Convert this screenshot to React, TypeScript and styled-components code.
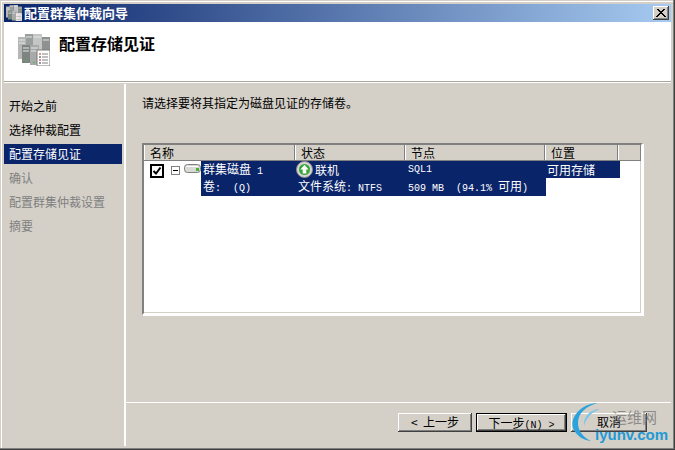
import React from 'react'
import styled, { createGlobalStyle } from 'styled-components'

const Global = createGlobalStyle`
  html, body {
    margin: 0;
    padding: 0;
    background: #d4d0c8;
  }
  * {
    box-sizing: border-box;
  }
`

const Window = styled.div`
  width: 675px;
  height: 450px;
  display: flex;
  flex-direction: column;
  position: relative;
  overflow: hidden;
  padding: 4px;
  background: #d4d0c8;
  font-family: 'Liberation Mono', 'Noto Sans CJK SC', monospace;
  font-size: 12px;
  color: #000;
  box-shadow: inset -1px -1px 0 #404040, inset -2px -2px 0 #808080, inset 1px 1px 0 #d4d0c8,
    inset 2px 2px 0 #fff;
`

const TitleBar = styled.div`
  height: 18px;
  flex: none;
  display: flex;
  align-items: center;
  padding: 0 2px 0 2px;
  gap: 2px;
  background: linear-gradient(90deg, #0a246a, #a6caf0);
  color: #fff;
  font-family: 'Noto Sans CJK SC', sans-serif;
  font-size: 13px;
  font-weight: 700;
`

const TitleText = styled.span`
  flex: 1;
  line-height: 18px;
`

const CloseButton = styled.div`
  width: 16px;
  height: 14px;
  display: flex;
  align-items: center;
  justify-content: center;
  background: #d4d0c8;
  box-shadow: inset -1px -1px 0 #404040, inset 1px 1px 0 #fff, inset -2px -2px 0 #808080;
`

const Header = styled.div`
  height: 59px;
  flex: none;
  display: flex;
  align-items: center;
  gap: 9px;
  padding: 0 0 4px 14px;
  background: #fff;
`

const HeaderTitle = styled.h1`
  margin: 0 0 13px;
  font-family: 'Noto Sans CJK SC', sans-serif;
  font-size: 16px;
  font-weight: 700;
  line-height: 20px;
`

const HeaderRule = styled.div`
  height: 3px;
  flex: none;
  border-top: 1px solid #a9a59c;
  border-bottom: 1px solid #d4d0c8;
  background: #fff;
`

const Body = styled.div`
  flex: 1;
  min-height: 0;
  display: flex;
`

const Sidebar = styled.nav`
  width: 120px;
  flex: none;
  padding-top: 10px;
  border-right: 2px solid #d4d0c8;
  display: flex;
  flex-direction: column;
  font-family: 'Noto Sans CJK SC', sans-serif;
`

const Step = styled.div<{ $active?: boolean; $disabled?: boolean }>`
  height: 20px;
  width: 118px;
  margin: 2px 0;
  padding-left: 5px;
  line-height: 20px;
  white-space: nowrap;
  background: ${(p) => (p.$active ? '#0a246a' : 'transparent')};
  color: ${(p) => (p.$active ? '#fff' : p.$disabled ? '#808080' : '#000')};
`

const Main = styled.main`
  flex: 1;
  min-width: 0;
  display: flex;
  flex-direction: column;
  border-left: 2px solid #fff;
`

const Content = styled.div`
  flex: 1;
  padding: 10px 28px 0 16px;
  display: flex;
  flex-direction: column;
  gap: 31px;
`

const Prompt = styled.p`
  margin: 0;
  height: 18px;
  line-height: 18px;
  font-family: 'Noto Sans CJK SC', sans-serif;
  white-space: nowrap;
`

const Table = styled.div`
  width: 501px;
  height: 172px;
  background: #fff;
  border: 2px solid;
  border-color: #808080 #fff #fff #808080;
  box-shadow: 1px 1px 0 #fff, inset -1px -1px 0 #d4d0c8;
  font-family: 'Noto Sans CJK SC', sans-serif;
`

const HeaderRow = styled.div`
  height: 15px;
  display: grid;
  grid-template-columns: 151px 110px 140px 73px 1fr;
  background: #d4d0c8;
  box-shadow: 0 1px 0 #808080;
`

const HeaderCell = styled.div`
  padding-left: 5px;
  line-height: 15px;
  border-left: 1px solid #fff;
  border-right: 1px solid #808080;
  overflow: hidden;
`

const TreeRow = styled.div`
  display: grid;
  grid-template-columns: 57px 95px 110px 140px 74px;
  grid-template-rows: 17px 18px;
  margin-top: 1px;
`

const Lead = styled.div`
  grid-row: 1 / span 2;
  display: flex;
  align-items: flex-start;
  padding: 3px 0 0 6px;
  gap: 7px;
`

const Check = styled.div`
  width: 14px;
  height: 14px;
  flex: none;
  border: 2px solid #000;
  display: flex;
  align-items: center;
  justify-content: center;
`

const Expander = styled.div`
  width: 9px;
  height: 9px;
  flex: none;
  margin: 2px -3px 0 0;
  border: 1px solid #808080;
  position: relative;
  &::after {
    content: '';
    position: absolute;
    left: 1px;
    right: 1px;
    top: 3px;
    height: 1px;
    background: #000;
  }
`

const Cell = styled.div<{ $indent?: number; $col?: number }>`
  grid-column: ${(p) => p.$col ?? 'auto'};
  background: #0a246a;
  color: #fff;
  display: flex;
  align-items: center;
  gap: 2px;
  padding-left: ${(p) => p.$indent ?? 0}px;
  white-space: pre;
  line-height: 17px;
  overflow: hidden;
`

const Latin = styled.span`
  font-family: 'Liberation Mono', monospace;
  font-size: 10px;
`

const Footer = styled.div`
  height: 44px;
  flex: none;
  border-top: 1px solid #fff;
  display: flex;
  justify-content: flex-end;
  align-items: flex-start;
  gap: 4px;
  padding: 10px 24px 0 0;
`

const Button = styled.div<{ $primary?: boolean; $w: number }>`
  width: ${(p) => p.$w}px;
  height: 19px;
  line-height: 17px;
  text-align: center;
  font-family: 'Noto Sans CJK SC', sans-serif;
  white-space: pre;
  background: #d4d0c8;
  border: ${(p) => (p.$primary ? '1px solid #000' : 'none')};
  box-shadow: inset -1px -1px 0 #404040, inset 1px 1px 0 #fff, inset -2px -2px 0 #808080;
`

const Watermark = styled.div`
  position: absolute;
  left: 571px;
  top: 402px;
  width: 104px;
  height: 48px;
  pointer-events: none;
`

const MarkCn = styled.span`
  position: absolute;
  left: 41px;
  top: 6px;
  font-family: 'Noto Sans CJK SC', sans-serif;
  font-size: 15px;
  line-height: 18px;
  color: rgba(120, 120, 120, 0.8);
`

const MarkEn = styled.span`
  position: absolute;
  left: 24px;
  top: 24px;
  font-family: 'Liberation Sans', sans-serif;
  font-size: 15px;
  font-weight: 700;
  line-height: 18px;
  color: #1e9ad6;
`

const ServersIcon = ({ size }: { size: number }) => (
  <svg width={size} height={size} viewBox="0 0 32 32" style={{ flex: 'none' }}>
    <rect x="7" y="0" width="8" height="22" fill="#9a9e9c" />
    <rect x="15" y="0" width="9" height="22" fill="#c3c6c4" />
    <rect x="24" y="3" width="8" height="18" fill="#8d918f" />
    <rect x="0" y="3" width="8" height="22" fill="#b4b7b5" />
    <rect x="4" y="11" width="8" height="18" fill="#7f8482" />
    <rect x="12" y="11" width="9" height="20" fill="#a7aaa8" />
    <path d="M1 6h6M1 9h6M8 3h6M16 3h7M25 6h6M5 14h6M5 17h6M13 14h7M13 17h7" stroke="#e4e6e5" />
    <rect x="7" y="26" width="2" height="1" fill="#3fbf3f" />
    <rect x="15" y="28" width="2" height="1" fill="#3fbf3f" />
    <rect x="19" y="16" width="13" height="16" fill="#fff" stroke="#7c7c7c" />
    <path d="M24 20h6M24 23h6M24 26h6M24 29h6" stroke="#808080" />
    <path d="M21 20h2" stroke="#c02020" />
    <path d="M21 23h2" stroke="#303030" />
    <path d="M21 26h2" stroke="#c02020" />
    <path d="M21 29h2" stroke="#303030" />
  </svg>
)

const DiskIcon = () => (
  <svg width="17" height="9" viewBox="0 0 17 9" style={{ flex: 'none' }}>
    <rect x="0.5" y="0.5" width="16" height="8" rx="3" fill="#d8dad6" stroke="#7f7f7f" />
    <rect x="2" y="2" width="12" height="1" fill="#fff" />
    <rect x="12" y="4" width="3" height="3" fill="#49b52e" />
  </svg>
)

const OnlineIcon = () => (
  <svg width="17" height="17" viewBox="0 0 17 17" style={{ flex: 'none' }}>
    <circle cx="8.5" cy="8.5" r="8" fill="#d5d5d5" stroke="#8c8c8c" />
    <circle cx="8.5" cy="8.5" r="5.5" fill="#35a535" />
    <path d="M8.5 3.8 L12.6 8.4 H10.3 V12.6 H6.7 V8.4 H4.4 Z" fill="#ffffff" />
  </svg>
)

export default function App() {
  return (
    <>
      <Global />
      <Window>
        <TitleBar>
          <ServersIcon size={16} />
          <TitleText>配置群集仲裁向导</TitleText>
          <CloseButton>
            <svg width="10" height="8" viewBox="0 0 10 8">
              <path d="M1 0l8 8M2 0l8 8M9 0l-8 8M8 0l-8 8" stroke="#000" />
            </svg>
          </CloseButton>
        </TitleBar>
        <Header>
          <ServersIcon size={32} />
          <HeaderTitle>配置存储见证</HeaderTitle>
        </Header>
        <HeaderRule />
        <Body>
          <Sidebar>
            <Step>开始之前</Step>
            <Step>选择仲裁配置</Step>
            <Step $active>配置存储见证</Step>
            <Step $disabled>确认</Step>
            <Step $disabled>配置群集仲裁设置</Step>
            <Step $disabled>摘要</Step>
          </Sidebar>
          <Main>
            <Content>
              <Prompt>请选择要将其指定为磁盘见证的存储卷。</Prompt>
              <Table>
                <HeaderRow>
                  <HeaderCell>名称</HeaderCell>
                  <HeaderCell>状态</HeaderCell>
                  <HeaderCell>节点</HeaderCell>
                  <HeaderCell>位置</HeaderCell>
                  <HeaderCell />
                </HeaderRow>
                <TreeRow>
                  <Lead>
                    <Check>
                      <svg width="10" height="10" viewBox="0 0 10 10">
                        <path d="M1.5 5 L4 7.5 L8.5 1.5" fill="none" stroke="#000" strokeWidth="2" />
                      </svg>
                    </Check>
                    <Expander />
                    <DiskIcon />
                  </Lead>
                  <Cell $indent={2}>
                    <span>
                      群集磁盘<Latin> 1</Latin>
                    </span>
                  </Cell>
                  <Cell>
                    <OnlineIcon />
                    <span>联机</span>
                  </Cell>
                  <Cell $indent={2}>
                    <Latin>SQL1</Latin>
                  </Cell>
                  <Cell $indent={1}>可用存储</Cell>
                  <Cell $indent={2} $col={2}>
                    <span>
                      卷<Latin>:  (Q)</Latin>
                    </span>
                  </Cell>
                  <Cell $indent={2}>
                    <span>
                      文件系统<Latin>: NTFS</Latin>
                    </span>
                  </Cell>
                  <Cell $indent={2}>
                    <span>
                      <Latin>509 MB  (94.1% </Latin>可用<Latin>)</Latin>
                    </span>
                  </Cell>
                </TreeRow>
              </Table>
            </Content>
            <Footer>
              <Button $w={74}>{'<  上一步'}</Button>
              <Button $primary $w={91}>
                下一步<Latin>(N) &gt;</Latin>
              </Button>
              <Button $w={76}>取消</Button>
            </Footer>
          </Main>
        </Body>
        <Watermark>
          <svg width="50" height="48" viewBox="0 0 50 48">
            <path d="M27 1 C9 1 -3 18 3 28 C6 34 12 38 20 39 C12 35 7 29 7 21 C7 11 15 4 27 1 Z" fill="#2aa3dc" />
            <path d="M29 7 C19 7 12 15 13 24 C15 16 21 10 29 7 Z" fill="#7cc6ea" />
          </svg>
          <MarkCn>运维网</MarkCn>
          <MarkEn>iyunv.com</MarkEn>
        </Watermark>
      </Window>
    </>
  )
}
